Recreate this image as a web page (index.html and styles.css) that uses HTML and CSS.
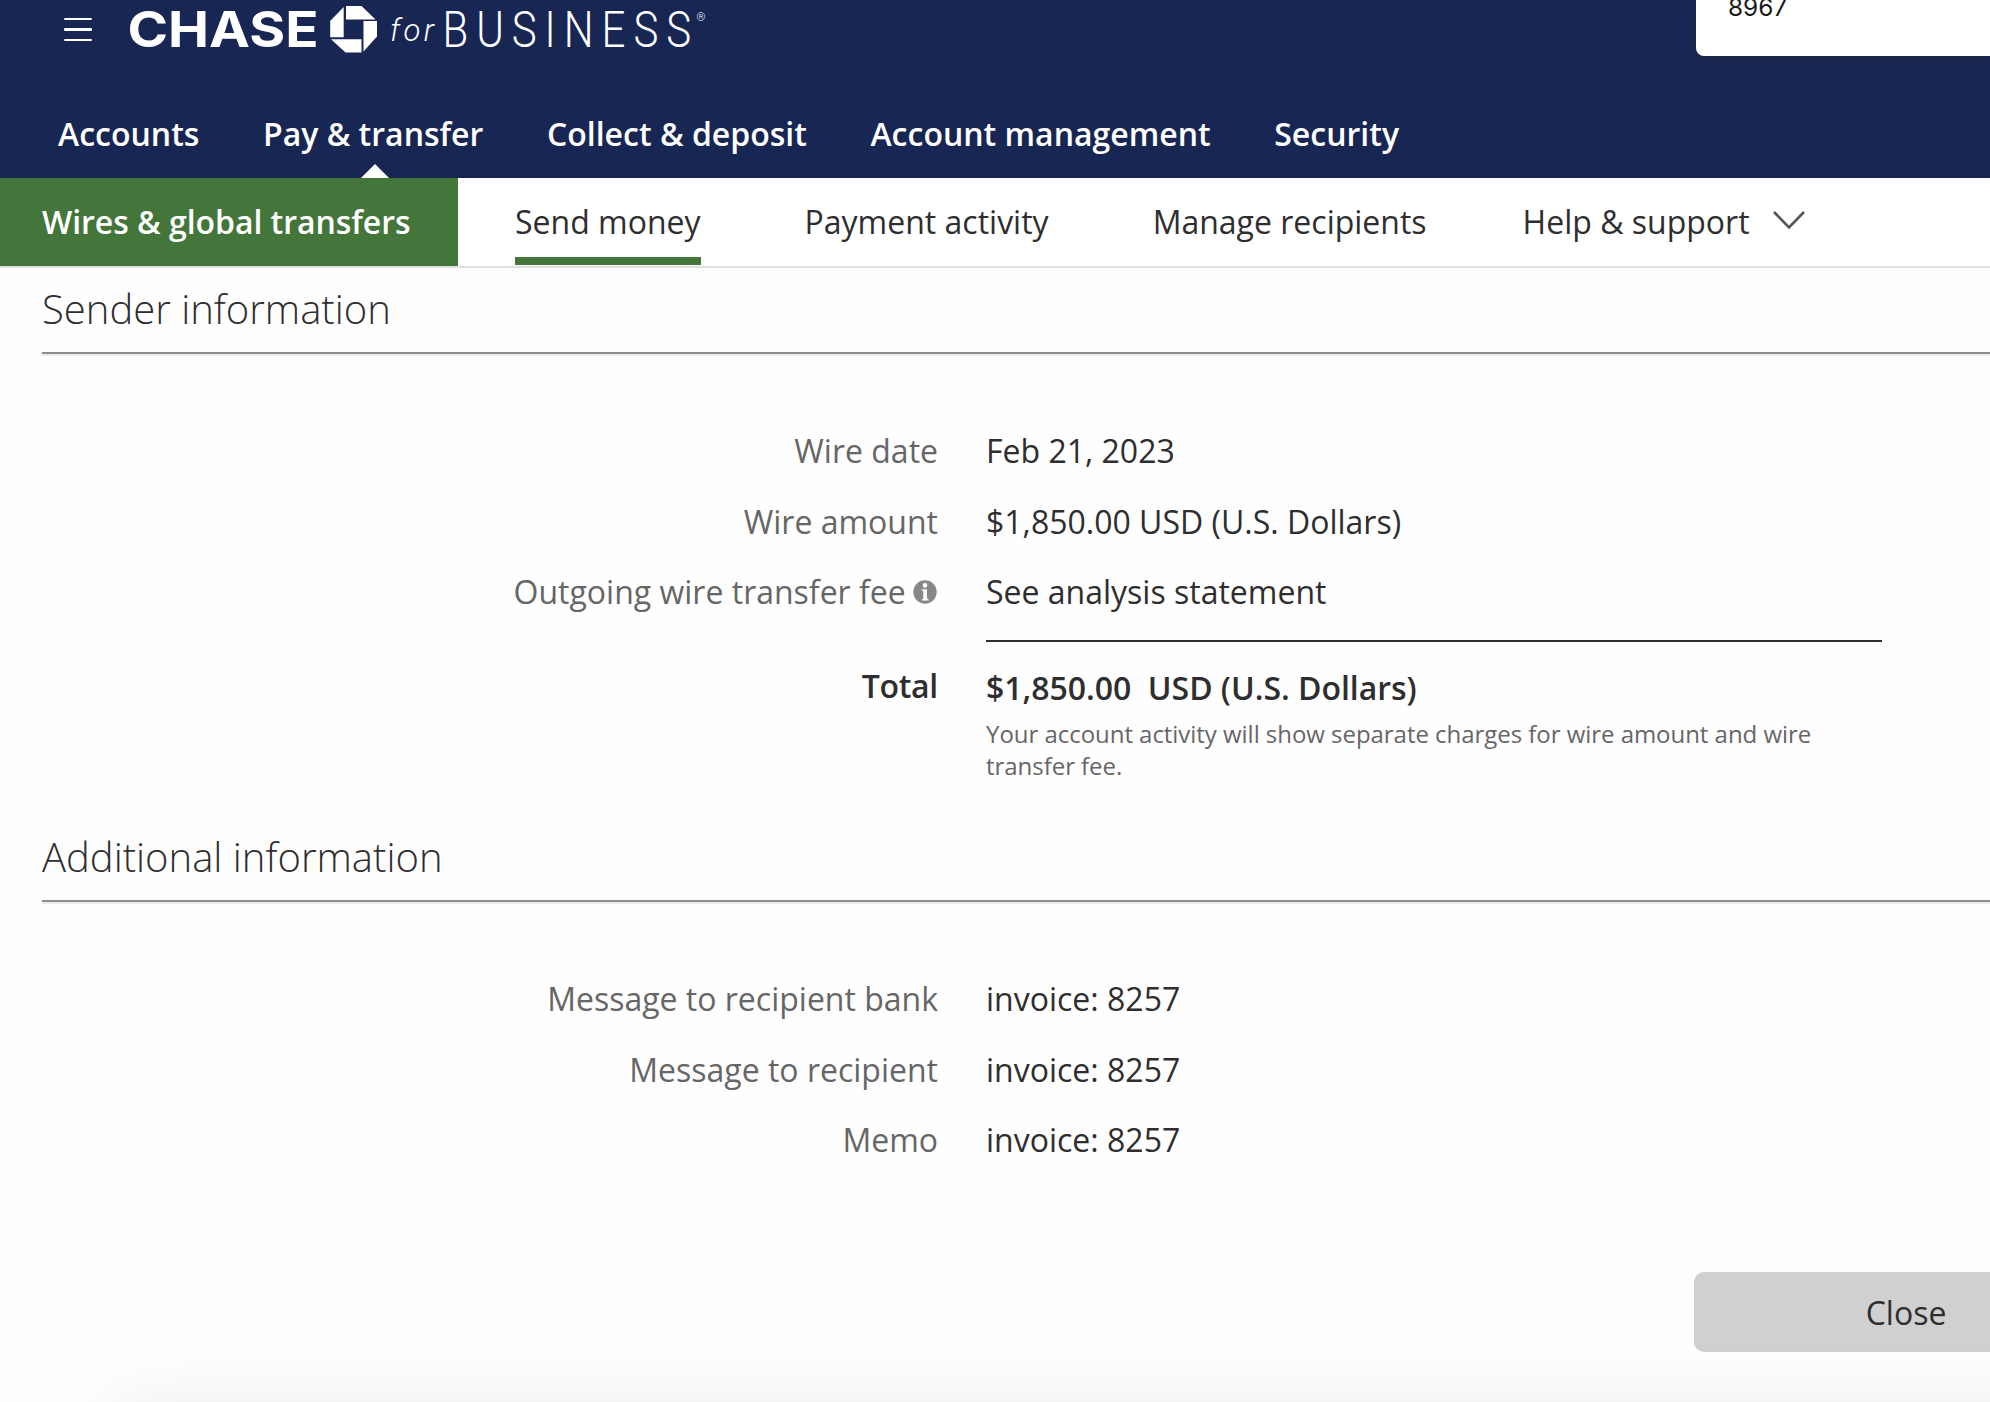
FILE: index.html
```html
<!DOCTYPE html>
<html lang="en">
<head>
    <meta charset="UTF-8">
    <meta name="viewport" content="width=device-width, initial-scale=1.0">
    <title>Chase for Business - Wire details</title>
    <link rel="stylesheet" href="styles.css">
</head>
<body>
    <header class="header">
        <div class="header__top">
            <button class="menu-button" aria-label="Menu">
                <span class="menu-button__line"></span>
                <span class="menu-button__line"></span>
                <span class="menu-button__line"></span>
            </button>
            <svg class="logo" width="580" height="60" viewBox="130 0 580 60">
                <text class="logo__chase" x="127.500" y="47" textLength="191" lengthAdjust="spacingAndGlyphs">CHASE</text>
                <g fill="#fff">
                    <path d="M346 6h15.500l14 13.500h-29.500z"/>
                    <path d="M377 21v15.500l-13.500 15v-30.500z"/>
                    <path d="M361.500 52.500h-16l-14.500-13.200h30.500z"/>
                    <path d="M330.200 37.300v-16.300l13.500-14v30.300z"/>
                </g>
                <text class="logo__for" x="390" y="41" textLength="44" lengthAdjust="spacing">for</text>
                <text class="logo__business" transform="translate(442.500 47) scale(.84 1)" textLength="296">BUSINESS</text>
                <text class="logo__mark" x="696.500" y="20.500">®</text>
            </svg>
        </div>
        <nav class="nav">
            <a class="nav__link">Accounts</a>
            <a class="nav__link is-selected">Pay &amp; transfer</a>
            <a class="nav__link">Collect &amp; deposit</a>
            <a class="nav__link">Account management</a>
            <a class="nav__link">Security</a>
        </nav>
        <div class="account-card">8967</div>
    </header>

    <nav class="subnav">
        <h1 class="subnav__title">Wires &amp; global transfers</h1>
        <a class="subnav__link subnav__link--send is-selected">Send money</a>
        <a class="subnav__link subnav__link--activity">Payment activity</a>
        <a class="subnav__link subnav__link--recipients">Manage recipients</a>
        <a class="subnav__link">Help &amp; support</a>
        <svg class="subnav__chevron" width="34" height="20" viewBox="0 0 34 20">
            <path d="M2 2l15 15.500L32 2" fill="none" stroke="#555" stroke-width="2.600"/>
        </svg>
    </nav>

    <main class="content">
        <section class="section">
            <h2 class="section__title">Sender information</h2>
            <dl class="details">
                <dt>Wire date</dt>
                <dd>Feb 21, 2023</dd>
                <dt>Wire amount</dt>
                <dd>$1,850.00 USD (U.S. Dollars)</dd>
                <dt>
                    Outgoing wire transfer fee
                    <svg class="info" width="24" height="24" viewBox="0 0 24 24">
                        <circle cx="12" cy="12" r="11.700" fill="#888"/>
                        <circle cx="12" cy="5.400" r="2.300" fill="#fff"/>
                        <path d="M8.800 9.200h5.200v8.600q0 1.200 1.500 1.500v1.200h-6.500v-1.200q1.300-.3 1.300-1.500v-5.600q0-1.400-1.500-1.700z" fill="#fff"/>
                    </svg>
                </dt>
                <dd>See analysis statement</dd>
                <dt class="total-label">Total</dt>
                <dd class="total">
                    <strong class="total__amount">$1,850.00&nbsp; USD (U.S. Dollars)</strong>
                    <p class="total__note">Your account activity will show separate charges for wire amount and wire transfer fee.</p>
                </dd>
            </dl>
        </section>
        <section class="section">
            <h2 class="section__title">Additional information</h2>
            <dl class="details">
                <dt>Message to recipient bank</dt>
                <dd>invoice: 8257</dd>
                <dt>Message to recipient</dt>
                <dd>invoice: 8257</dd>
                <dt>Memo</dt>
                <dd>invoice: 8257</dd>
            </dl>
        </section>
        <button class="close-button">Close</button>
    </main>
    <footer class="footer"></footer>
</body>
</html>
```
FILE: styles.css
```css
* { box-sizing: border-box; }
html, body { height: 100%; }
body { position: relative; margin: 0; overflow: hidden; background: #fefefe; color: #2e2e30; font-family: "Open Sans", sans-serif; font-size: 32px; line-height: 44px; }
button { border: 0; font: inherit; color: inherit; }

.header { position: relative; height: 178px; background: #182654; color: #fff; }
.header__top { display: flex; height: 60px; padding-left: 64px; }
.menu-button { display: flex; flex-direction: column; gap: 8px; width: 28px; margin-right: 38px; padding: 18px 0 0; background: none; }
.menu-button__line { width: 28px; height: 2.400px; border-radius: 1px; background: #fff; }
.logo { overflow: visible; fill: #fff; }
.logo__chase { font: 700 49px Inter, sans-serif; }
.logo__for { font: italic 300 31px Roboto, sans-serif; }
.logo__business { font: 300 50px Roboto, sans-serif; }
.logo__mark { font: 300 11px Roboto, sans-serif; }

.nav { display: flex; gap: 63.600px; height: 118px; padding: 52px 58px 0; font-weight: 600; white-space: nowrap; }
.nav__link { position: relative; }
.nav__link.is-selected::after { content: ""; position: absolute; bottom: 0; left: 50%; margin-left: -12px; border: 14px solid transparent; border-top: 0; border-bottom-color: #fff; }

.account-card { position: absolute; top: 0; right: 0; width: 294px; height: 56px; padding-left: 32px; border-radius: 0 0 0 8px; background: #fff; color: #1a1a1c; font: 24.400px/14px Inter, sans-serif; box-shadow: 0 4px 12px rgba(40, 40, 40, .4); }

.subnav { display: flex; height: 90px; border-bottom: 2px solid #e0e0e0; background: #fff; line-height: 88px; white-space: nowrap; }
.subnav__title { width: 458px; margin: 0 57px 0 0; padding-left: 42px; background: #44763b; color: #fff; font-size: 32px; font-weight: 600; letter-spacing: -.04px; }
.subnav__link--send { margin-right: 104px; }
.subnav__link--activity { margin-right: 104px; }
.subnav__link--recipients { margin-right: 96px; }
.subnav__link.is-selected { height: 87px; border-bottom: 8px solid #44763b; }
.subnav__chevron { margin: 32px 0 0 22.500px; }

.content { padding-left: 42px; }
.section { height: 548px; padding-top: 12px; }
.section__title { margin: 0; height: 74px; border: solid #8e8e8e; border-width: 0 0 2px; box-shadow: 0 2px #ececec; font-size: 40px; font-weight: 300; line-height: 57px; }
.details { display: grid; grid-template-columns: 896px 896px; column-gap: 48px; row-gap: 26.500px; margin: 75px 0 0; }
.details dt { color: #666; text-align: right; white-space: nowrap; }
.details dd { margin: 0; }
.info { margin: 0 1px 0 -1px; vertical-align: 0; }
.details .total-label { padding-top: 23px; color: #2e2e30; font-weight: 600; letter-spacing: -.3px; }
.details .total { margin-top: -1px; border-top: 2px solid #2e2e30; padding-top: 24px; }
.total__amount { display: block; font-weight: 600; letter-spacing: -.03px; }
.total__note { margin: 8px 0 0; color: #666; font-size: 24px; line-height: 32px; letter-spacing: -.04px; }
.close-button { display: block; width: 296px; height: 80px; margin: -92px 0 0 auto; padding: 2px 0 0 128px; border-radius: 10px 0 0 10px; background: #d0d0d0; }
.footer { position: absolute; left: 110px; right: 0; bottom: 0; height: 0; box-shadow: 70px 76px 80px 60px rgba(0, 0, 0, .11); }
```
